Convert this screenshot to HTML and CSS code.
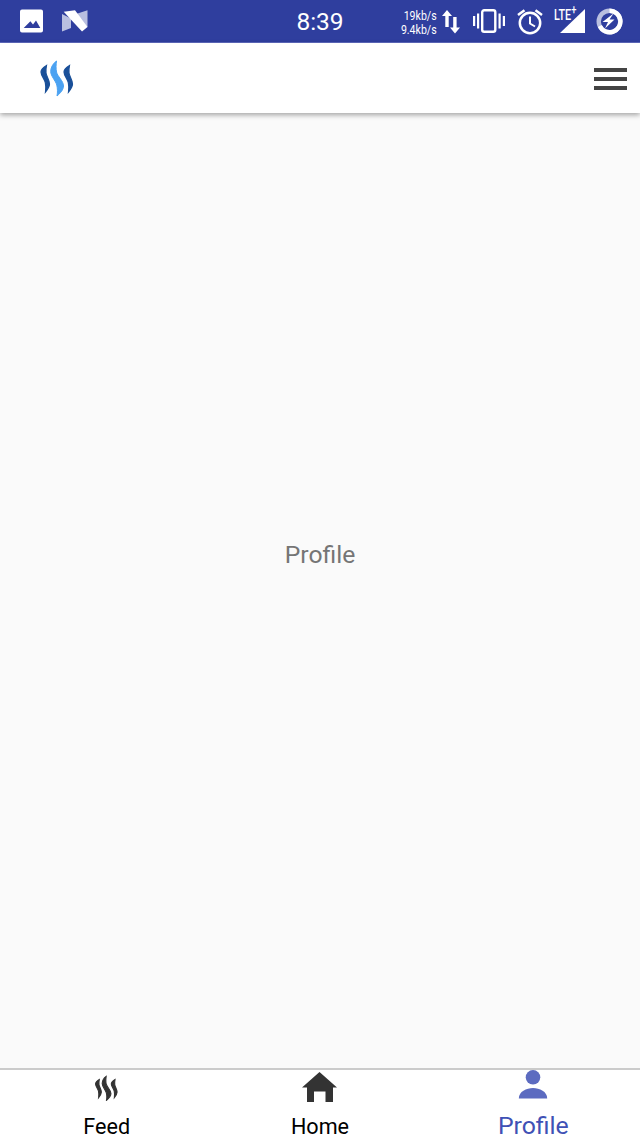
FILE: index.html
```html
<!DOCTYPE html>
<html lang="en">
<head>
    <meta charset="UTF-8">
    <meta name="viewport" content="width=device-width, initial-scale=1.0">
    <title>Profile</title>
    <link rel="stylesheet" href="styles.css">
</head>
<body>
    <div class="status-bar">
        <div class="status-left">
            <svg class="icon-image" width="23" height="24" viewBox="0 0 23 24">
                <path fill="#fff" fill-rule="evenodd" d="M2 .5h19a2 2 0 0 1 2 2v19a2 2 0 0 1-2 2H2a2 2 0 0 1-2-2v-19a2 2 0 0 1 2-2zM3.700 19h16.600l-4.300-7.500-3 4-2.600-3.300z"/>
            </svg>
            <svg class="icon-n" width="26" height="22" viewBox="0 0 26 22">
                <path fill="#b9bfe0" d="M0 4l9 4.500V18L0 21.500zM14 4L25.500 .3V17L14 12z"/>
                <path fill="#fff" d="M1.700 1.700L13 .3 25.500 17 20 21.500z"/>
            </svg>
        </div>
        <div class="status-time">8:39</div>
        <div class="status-right">
            <div class="net-speed">19kb/s<br>9.4kb/s</div>
            <svg class="icon-arrows" width="18" height="24" viewBox="0 0 18 24">
                <path fill="#fff" d="M5 0L10 6H6.700V17H3.300V6H0zM11.200 7h3.400v10.500H18L13 23.500 8 17.500h3.200z"/>
            </svg>
            <svg class="icon-vibrate" width="32" height="24" viewBox="0 0 32 24">
                <rect x="9.200" y="1.200" width="13.100" height="21.600" rx="2" fill="none" stroke="#fff" stroke-width="2.400"/>
                <path fill="#fff" d="M0 7h2.200v10H0zM4 4.500h2.200v15H4zM25.500 4.500h2.200v15h-2.200zM29.800 7H32v10h-2.200z"/>
            </svg>
            <svg class="icon-alarm" width="26" height="26" viewBox="0 0 26 26">
                <circle cx="13" cy="14" r="10.200" fill="none" stroke="#fff" stroke-width="2.500"/>
                <path fill="none" stroke="#fff" stroke-width="2" d="M13 7.500v7l5 3"/>
                <path fill="none" stroke="#fff" stroke-width="2.500" d="M1 6l6.500-4.800M25 6l-6.500-4.800"/>
            </svg>
            <div class="signal">
                <span class="lte">LTE<sup>+</sup></span>
                <svg class="icon-signal" width="32" height="26" viewBox="0 0 32 26">
                    <path fill="#fff" d="M31 1v24H6z"/>
                </svg>
            </div>
            <svg class="icon-battery" width="27" height="27" viewBox="0 0 27 27">
                <circle cx="13.500" cy="13.500" r="10.800" fill="none" stroke="#b9bfe0" stroke-width="4.400"/>
                <path fill="none" stroke="#fff" stroke-width="4.400" d="M13.500 2.700A10.800 10.800 0 1 1 3.800 18"/>
                <path fill="#fff" d="M17.500 5.500L6.500 14h5.500L9 20.500l9.500-9h-5z"/>
            </svg>
        </div>
    </div>

    <div class="header">
        <svg class="logo" width="36" height="38" viewBox="0 0 36 38">
            <path class="stripe-dark" d="M7.500 6.500C4 8.500 2 10.500 2 13 2 16.500 5.500 20 6.300 23.500 6.800 26 7 29.500 6.500 33 9 30 10.500 27.500 10.500 25 10.500 21 7.500 17.500 7 14 6.700 11.500 7 9 7.500 6.500z"/>
            <path class="stripe-dark" transform="translate(23 0)" d="M7.500 6.500C4 8.500 2 10.500 2 13 2 16.500 5.500 20 6.300 23.500 6.800 26 7 29.500 6.500 33 9 30 10.500 27.500 10.500 25 10.500 21 7.500 17.500 7 14 6.700 11.500 7 9 7.500 6.500z"/>
            <path class="stripe-light" d="M17.500 2C14 4.500 11.700 8.500 11.700 12.500 11.700 17 16.500 21.500 17.800 26 18.500 29.500 18.800 33 18 37 21.500 34 24.500 30.500 24.500 27 24.500 22 18.500 17.500 17.500 13 16.800 9.500 17 5.500 17.500 2z"/>
        </svg>
        <div class="menu-btn">
            <span></span>
            <span></span>
            <span></span>
        </div>
    </div>

    <div class="content">Profile</div>

    <div class="tabs">
        <div class="tab">
            <div class="tab-icon">
                <svg class="icon-feed" width="25" height="26" viewBox="0 0 36 38">
                    <path d="M7.500 6.500C4 8.500 2 10.500 2 13 2 16.500 5.500 20 6.300 23.500 6.800 26 7 29.500 6.500 33 9 30 10.500 27.500 10.500 25 10.500 21 7.500 17.500 7 14 6.700 11.500 7 9 7.500 6.500z"/>
                    <path transform="translate(23 0)" d="M7.500 6.500C4 8.500 2 10.500 2 13 2 16.500 5.500 20 6.300 23.500 6.800 26 7 29.500 6.500 33 9 30 10.500 27.500 10.500 25 10.500 21 7.500 17.500 7 14 6.700 11.500 7 9 7.500 6.500z"/>
                    <path d="M17.500 2C14 4.500 11.700 8.500 11.700 12.500 11.700 17 16.500 21.500 17.800 26 18.500 29.500 18.800 33 18 37 21.500 34 24.500 30.500 24.500 27 24.500 22 18.500 17.500 17.500 13 16.800 9.500 17 5.500 17.500 2z"/>
                </svg>
            </div>
            <span class="tab-label">Feed</span>
        </div>
        <div class="tab">
            <div class="tab-icon">
                <svg width="36" height="32" viewBox="0 0 36 32">
                    <path fill="#333" d="M17.500 2L35 17.500H31V32H23.500V21.500H12V32H5V17.500H0z"/>
                </svg>
            </div>
            <span class="tab-label">Home</span>
        </div>
        <div class="tab tab-active">
            <div class="tab-icon">
                <svg width="30" height="32" viewBox="0 0 30 32">
                    <circle cx="15" cy="7.300" r="7.300" fill="#5c6bc0"/>
                    <path fill="#5c6bc0" d="M.8 28.500c0-7 7.700-10.500 14.200-10.500s14.200 3.500 14.200 10.500z"/>
                </svg>
            </div>
            <span class="tab-label">Profile</span>
        </div>
    </div>
</body>
</html>
```

FILE: styles.css
```css
html, body {
    margin: 0;
    height: 100%;
}

body {
    display: flex;
    flex-direction: column;
    height: 1138px;
    overflow: hidden;
    background-color: #fafafa;
    font-family: Roboto, sans-serif;
}

.status-bar {
    display: grid;
    grid-template-columns: 1fr auto 1fr;
    align-items: center;
    height: 42px;
    background-color: #2f3e9e;
    border-bottom: 1px solid #5f6bc0;
    color: #fff;
    flex-shrink: 0;
}

.status-left {
    display: flex;
    align-items: center;
    gap: 19px;
    padding-left: 20px;
}

.status-time {
    font-size: 24.5px;
}

.status-right {
    display: flex;
    align-items: center;
    justify-content: flex-end;
    padding-right: 17px;
}

.net-speed {
    font-size: 12px;
    line-height: 14px;
    text-align: right;
    margin: 3px 5px 0 0;
    transform: scaleX(0.88);
    transform-origin: right;
}

.icon-arrows {
    margin-top: 2px;
}

.icon-vibrate {
    margin-left: 13px;
}

.icon-alarm {
    margin: 1px 0 0 12px;
}

.signal {
    position: relative;
    width: 32px;
    height: 26px;
    margin-left: 11px;
}

.lte {
    position: absolute;
    left: 0;
    top: -1px;
    font-size: 15px;
    line-height: 16px;
    font-weight: 500;
    transform: scaleX(0.72);
    transform-origin: left;
    z-index: 1;
}

.lte sup {
    font-size: 13px;
    line-height: 0;
}

.icon-battery {
    margin-left: 10px;
}

.header {
    display: flex;
    align-items: center;
    justify-content: space-between;
    height: 70px;
    padding: 0 13px 0 39px;
    background-color: #fff;
    box-shadow: 0 2px 5px rgba(0, 0, 0, 0.35);
    flex-shrink: 0;
    z-index: 1;
}

.stripe-dark {
    fill: #1a5099;
    stroke: #1a5099;
    stroke-width: 1.2;
}

.stripe-light {
    fill: #4ba2f2;
    stroke: #4ba2f2;
    stroke-width: 1;
}

.menu-btn {
    display: flex;
    flex-direction: column;
    gap: 5px;
    margin-top: 1px;
}

.menu-btn span {
    display: block;
    width: 33px;
    height: 4px;
    background-color: #444;
}

.content {
    flex: 1;
    display: flex;
    align-items: center;
    justify-content: center;
    padding-bottom: 72px;
    font-size: 24.7px;
    color: #757575;
}

.tabs {
    display: flex;
    height: 68px;
    background-color: #fff;
    border-top: 2px solid #cbcbcb;
    flex-shrink: 0;
}

.tab {
    flex: 1;
    display: flex;
    flex-direction: column;
    align-items: center;
}

.tab-icon {
    display: flex;
    justify-content: center;
    height: 32px;
}

.icon-feed {
    margin-top: 5px;
    fill: #333;
    stroke: #333;
    stroke-width: 1.6;
}

.tab-label {
    margin-top: auto;
    font-size: 21.6px;
    line-height: 22px;
    color: #000;
}

.tab-active .tab-label {
    font-size: 24.8px;
    line-height: 24px;
    color: #3f51b5;
}
```
